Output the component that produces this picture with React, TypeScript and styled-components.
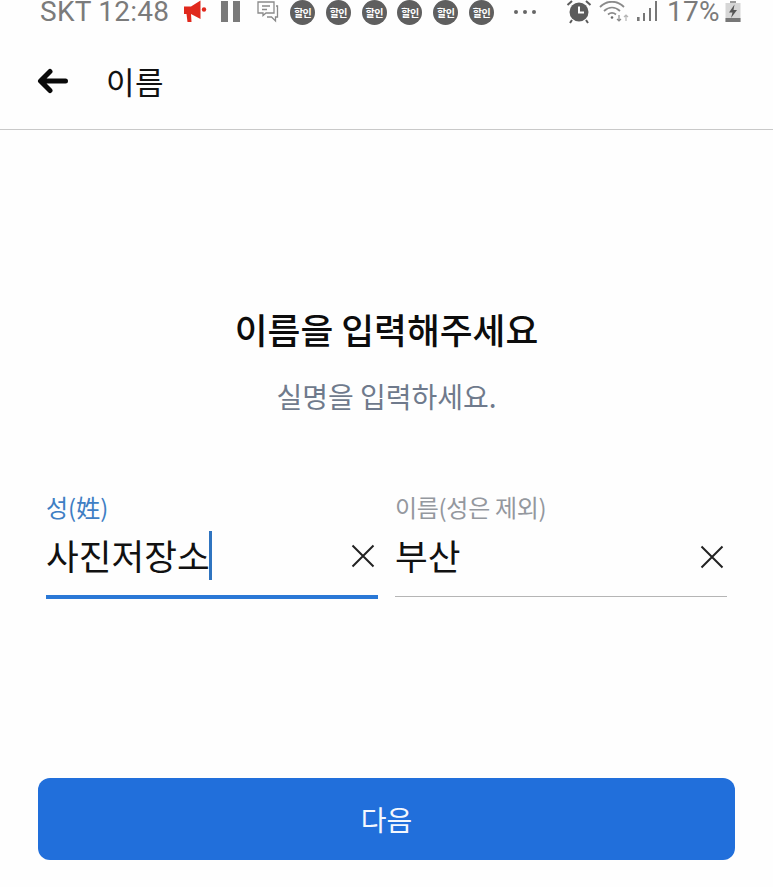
import React from "react";
import styled, { createGlobalStyle } from "styled-components";

const GlobalStyle = createGlobalStyle`
  html, body {
    margin: 0;
    padding: 0;
    background: #fefefe;
  }
  * {
    box-sizing: border-box;
  }
`;

const KR_FONT = `"Noto Sans CJK KR", "Noto Sans", sans-serif`;

const CloseSvg = styled.svg`
  flex-shrink: 0;
  margin-top: 3px;
`;

const CloseIcon = () => (
  <CloseSvg width="26" height="26" viewBox="0 0 26 26" fill="none" stroke="#222" strokeWidth="2">
    <path d="M2.5 2.5 L23.5 23.5 M23.5 2.5 L2.5 23.5" />
  </CloseSvg>
);

const BackArrow = () => (
  <svg width="32" height="26" viewBox="0 0 32 26" fill="none" stroke="#0a0a0a" strokeWidth="5" strokeLinecap="round" strokeLinejoin="round">
    <path d="M28.5 13 H5 M13 3.5 L3.5 13 L13 22.5" />
  </svg>
);

const Megaphone = () => (
  <svg width="25" height="24" viewBox="0 0 25 24">
    <path d="M1 6.5 H8 L17.5 0.5 V19 L8 14 L8.5 22 H4.5 L3.5 14 H1 Z" fill="#e0281c" />
    <circle cx="21" cy="9.5" r="2.2" fill="#e0281c" />
  </svg>
);

const PauseIcon = () => (
  <svg width="20" height="22" viewBox="0 0 20 22" fill="#7a7a7a">
    <rect x="0" y="0" width="7" height="21" />
    <rect x="12" y="0" width="7" height="21" />
  </svg>
);

const ChatIcon = () => (
  <svg width="22" height="22" viewBox="0 0 22 22" fill="none" stroke="#8a8a8a" strokeWidth="1.3">
    <path d="M4 1 H17 V12 H9 L6 14.5 V12 H1 V1 Z" />
    <path d="M5 5 H13 M5 8.5 H10" />
    <path d="M19 5 H20.5 V16 H18.5 V20 L14.5 16 H10" />
  </svg>
);

const AlarmIcon = () => (
  <svg width="26" height="24" viewBox="0 0 26 24">
    <circle cx="13" cy="12" r="9.5" fill="#5c5c5c" />
    <path d="M13 6.5 V12.5 H18" fill="none" stroke="#fff" strokeWidth="2" />
    <path d="M1.5 5 L6 1 M24.5 5 L20 1 M6 20 L4 23 M20 20 L22 23" stroke="#5c5c5c" strokeWidth="2" fill="none" />
  </svg>
);

const WifiIcon = () => (
  <svg width="31" height="22" viewBox="0 0 31 22" fill="none" stroke="#8a8a8a" strokeWidth="1.8">
    <path d="M1 6 C8 -1 18 -1 25 6" />
    <path d="M5 10 C10 5.5 16 5.5 21 10" />
    <path d="M9 13.5 C11.5 11.5 14.5 11.5 17 13.5" />
    <circle cx="13" cy="16.5" r="1.3" fill="#6a6a6a" stroke="none" />
    <path d="M20 14 V20 M18 18 L20 20 L22 18" strokeWidth="1.2" />
    <path d="M27 20 V14 M25 16 L27 14 L29 16" strokeWidth="1.2" stroke="#b5b5b5" />
  </svg>
);

const SignalIcon = () => (
  <svg width="22" height="22" viewBox="0 0 22 22" fill="#777">
    <rect x="0" y="16" width="2.6" height="4" />
    <rect x="6" y="12" width="2" height="8" />
    <rect x="12" y="7" width="2" height="13" />
    <rect x="18" y="0" width="2" height="20" />
  </svg>
);

const BatteryIcon = () => (
  <svg width="16" height="22" viewBox="0 0 16 22">
    <rect x="5" y="0" width="6" height="2" fill="#9a9a9a" />
    <rect x="0.5" y="2" width="15" height="19" fill="#d6d6d6" />
    <rect x="0.5" y="17" width="15" height="4" fill="#777" />
    <path d="M9.5 3.5 L4 11.5 H7.5 L6 17 L12 9 H8.5 Z" fill="#555" />
  </svg>
);

const StatusBar = styled.div`
  display: flex;
  align-items: center;
  height: 24px;
  padding-left: 40px;
  font-family: Roboto, "Noto Sans", sans-serif;
  color: #7b7b7b;
`;

const StatusText = styled.span<{ $ml?: number }>`
  margin-left: ${({ $ml }) => $ml ?? 0}px;
  font-size: 28px;
  line-height: 24px;
  letter-spacing: 0.25px;
  white-space: nowrap;
`;

const IconSlot = styled.span<{ $ml: number }>`
  display: flex;
  align-items: center;
  flex-shrink: 0;
  margin-left: ${({ $ml }) => $ml}px;
`;

const SaleBadge = styled.span`
  display: flex;
  align-items: center;
  justify-content: center;
  flex-shrink: 0;
  width: 25px;
  height: 25px;
  margin-left: 10.8px;
  border-radius: 50%;
  background: #5f5f5f;
  color: #fff;
  font-family: ${KR_FONT};
  font-size: 10px;
  font-weight: 700;
  letter-spacing: -0.5px;
`;

const Dots = styled.span`
  display: flex;
  gap: 5px;
  margin-left: 20px;
`;

const Dot = styled.i`
  display: block;
  width: 4px;
  height: 4px;
  border-radius: 50%;
  background: #666;
`;

const Page = styled.div`
  display: flex;
  flex-direction: column;
  width: 773px;
  height: 887px;
  overflow: hidden;
  background: #fefefe;
`;

const Header = styled.header`
  display: flex;
  align-items: center;
  gap: 37px;
  height: 106px;
  padding: 9px 0 0 37px;
  border-bottom: 1px solid #c9c9c9;
`;

const HeaderTitle = styled.h1`
  margin: 0;
  font-family: ${KR_FONT};
  font-size: 31px;
  font-weight: 400;
  line-height: 40px;
  letter-spacing: 0.5px;
  color: #111;
`;

const Intro = styled.section`
  display: flex;
  flex-direction: column;
  align-items: center;
  padding-top: 174px;
  font-family: ${KR_FONT};
`;

const Heading = styled.h2`
  margin: 0;
  font-size: 35.7px;
  font-weight: 500;
  line-height: 50px;
  color: #0c0c0c;
`;

const SubHeading = styled.p`
  margin: 22px 0 0;
  font-size: 28px;
  font-weight: 400;
  line-height: 40px;
  color: #6f7a8c;
`;

const Fields = styled.div`
  display: grid;
  grid-template-columns: 332px 332px;
  column-gap: 17px;
  padding: 75px 0 0 46px;
  font-family: ${KR_FONT};
`;

const Field = styled.div`
  display: flex;
  flex-direction: column;
`;

const FieldLabel = styled.label<{ $active?: boolean }>`
  font-size: 24px;
  line-height: 32px;
  letter-spacing: ${({ $active }) => ($active ? 0 : -0.3)}px;
  color: ${({ $active }) => ($active ? "#3f7fc4" : "#94989e")};
`;

const InputRow = styled.div<{ $active?: boolean }>`
  display: flex;
  align-items: center;
  justify-content: space-between;
  height: ${({ $active }) => ($active ? 77 : 75)}px;
  padding: 0 2px 8px 0;
  margin-top: -1px;
  border-bottom: ${({ $active }) => ($active ? "4px solid #2a78d6" : "1px solid #b5b5b5")};
`;

const InputValue = styled.span`
  display: flex;
  align-items: center;
  font-size: 35.6px;
  line-height: 50px;
  color: #111;
`;

const Caret = styled.i`
  display: block;
  width: 3px;
  height: 49px;
  margin: 2px 0 0 -1px;
  background: #2f74c0;
`;

const Spacer = styled.div`
  flex: 1;
`;

const Footer = styled.footer`
  padding: 0 38px 27px;
`;

const NextButton = styled.button`
  display: block;
  width: 100%;
  height: 82px;
  padding: 0;
  border: 0;
  border-radius: 12px;
  background: #216fdb;
  color: #f4f8fe;
  font-family: ${KR_FONT};
  font-size: 28px;
  font-weight: 400;
`;

const App: React.FC = () => (
  <Page>
    <GlobalStyle />
    <StatusBar>
      <StatusText>SKT 12:48</StatusText>
      <IconSlot $ml={14}>
        <Megaphone />
      </IconSlot>
      <IconSlot $ml={13}>
        <PauseIcon />
      </IconSlot>
      <IconSlot $ml={16}>
        <ChatIcon />
      </IconSlot>
      {Array.from({ length: 6 }).map((_, i) => (
        <SaleBadge key={i}>할인</SaleBadge>
      ))}
      <Dots>
        <Dot />
        <Dot />
        <Dot />
      </Dots>
      <IconSlot $ml={30}>
        <AlarmIcon />
      </IconSlot>
      <IconSlot $ml={7}>
        <WifiIcon />
      </IconSlot>
      <IconSlot $ml={7}>
        <SignalIcon />
      </IconSlot>
      <StatusText $ml={8}>17%</StatusText>
      <IconSlot $ml={5}>
        <BatteryIcon />
      </IconSlot>
    </StatusBar>
    <Header>
      <BackArrow />
      <HeaderTitle>이름</HeaderTitle>
    </Header>
    <Intro>
      <Heading>이름을 입력해주세요</Heading>
      <SubHeading>실명을 입력하세요.</SubHeading>
    </Intro>
    <Fields>
      <Field>
        <FieldLabel $active>성(姓)</FieldLabel>
        <InputRow $active>
          <InputValue>
            사진저장소
            <Caret />
          </InputValue>
          <CloseIcon />
        </InputRow>
      </Field>
      <Field>
        <FieldLabel>이름(성은 제외)</FieldLabel>
        <InputRow>
          <InputValue>부산</InputValue>
          <CloseIcon />
        </InputRow>
      </Field>
    </Fields>
    <Spacer />
    <Footer>
      <NextButton>다음</NextButton>
    </Footer>
  </Page>
);

export default App;
